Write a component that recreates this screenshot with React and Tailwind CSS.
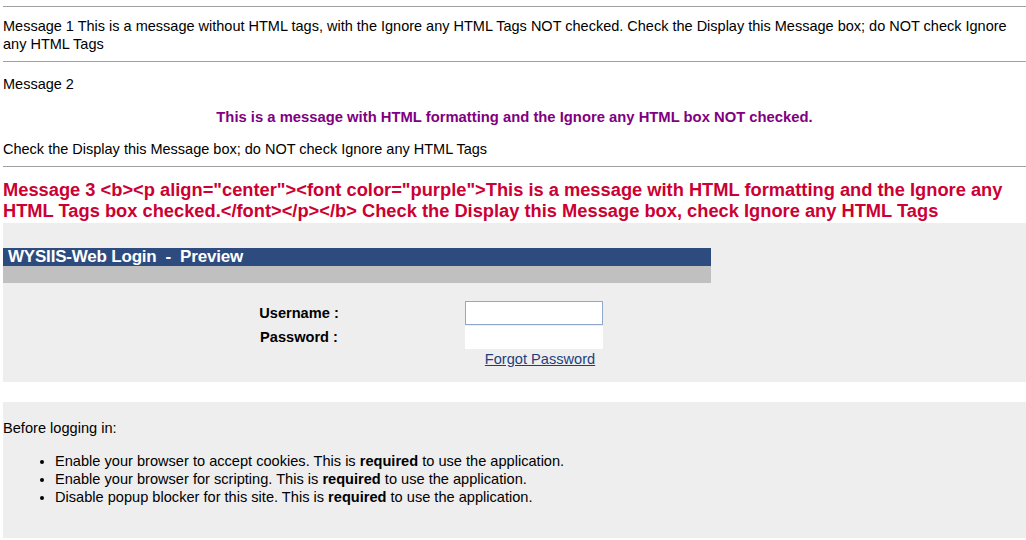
const font = { fontFamily: '"Liberation Sans", Arial, sans-serif' }

function Rule() {
  return <div className="border-t border-[#a0a0a0] h-0" />
}

export default function App() {
  return (
    <div className="bg-white w-[1026px] h-[540px] overflow-hidden pl-[3px] text-black" style={font}>
      <div className="pt-[6px]">
        <Rule />
      </div>

      {/* Message 1 */}
      <div className="pt-[10px] text-[14.5px] leading-[18px]">
        Message 1 This is a message without HTML tags, with the Ignore any HTML Tags NOT checked. Check the Display this Message box; do NOT check Ignore any HTML Tags
      </div>
      <div className="pt-[8px]">
        <Rule />
      </div>

      {/* Message 2 */}
      <div className="pt-[13px] text-[14.5px] leading-[18px]">Message 2</div>
      <div className="pt-[15px] text-center font-bold text-[#800080] text-[14.8px] leading-[18px]">
        This is a message with HTML formatting and the Ignore any HTML box NOT checked.
      </div>
      <div className="pt-[14px] text-[14.5px] leading-[18px]">
        Check the Display this Message box; do NOT check Ignore any HTML Tags
      </div>
      <div className="pt-[8px]">
        <Rule />
      </div>

      {/* Message 3 */}
      <div className="pt-[12px] font-bold text-[#cc0033] text-[18.3px] leading-[21px]">
        Message 3 &lt;b&gt;&lt;p align="center"&gt;&lt;font color="purple"&gt;This is a message with HTML formatting and the Ignore any HTML Tags box checked.&lt;/font&gt;&lt;/p&gt;&lt;/b&gt; Check the Display this Message box, check Ignore any HTML Tags
      </div>

      {/* Login panel */}
      <div className="mt-[2px] bg-[#eeeeee] h-[159px] pt-[25px]">
        <div className="w-[708px]">
          <div className="bg-[#2d4b7e] h-[18px] px-[5px] text-white font-bold text-[17px] leading-[18px] tracking-[-0.2px] whitespace-pre">
            WYSIIS-Web Login  -  Preview
          </div>
          <div className="bg-[#c0c0c0] h-[17px]" />
        </div>
        <div className="flex pt-[18px]">
          <div className="w-[462px] flex flex-col items-center pl-[130px]">
            <div className="font-bold text-[14.6px] leading-[24px]">Username :</div>
            <div className="font-bold text-[14.6px] leading-[24px]">Password :</div>
          </div>
          <div className="flex flex-col w-[138px]">
            <div className="h-[24px] bg-white border border-[#8fa8cc]" />
            <div className="h-[23px] mt-[1px] bg-white" />
            <a className="text-[14.6px] leading-[18px] text-[#1f3e7e] underline text-center pt-[1px] pl-[12px]">
              Forgot Password
            </a>
          </div>
        </div>
      </div>

      {/* Info panel */}
      <div className="mt-[20px] bg-[#eeeeee] h-[136px] pt-[17px] text-[14.6px]">
        <div className="leading-[18px]">Before logging in:</div>
        <ul className="pt-[15px] pl-[52px] leading-[18px] list-disc">
          <li>Enable your browser to accept cookies. This is <b>required</b> to use the application.</li>
          <li>Enable your browser for scripting. This is <b>required</b> to use the application.</li>
          <li>Disable popup blocker for this site. This is <b>required</b> to use the application.</li>
        </ul>
      </div>
    </div>
  )
}
